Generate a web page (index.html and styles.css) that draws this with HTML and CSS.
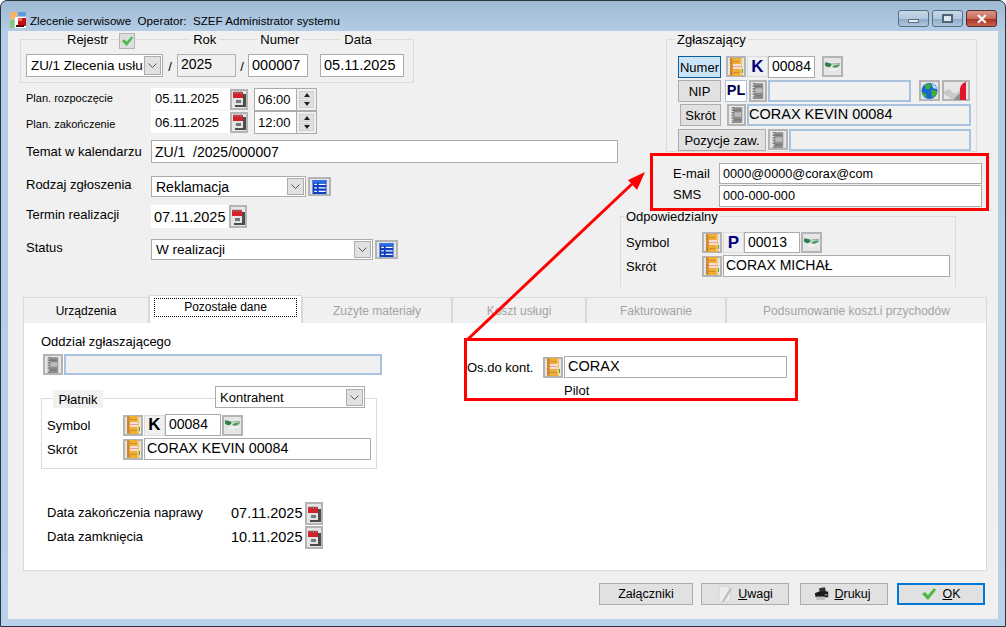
FILE: index.html
```html
<!DOCTYPE html>
<html lang="pl">
<head>
    <meta charset="UTF-8">
    <meta name="viewport" content="width=device-width, initial-scale=1.0">
    <title>Zlecenie serwisowe</title>
    <link rel="stylesheet" href="styles.css">
</head>
<body>
    <svg class="defs" width="0" height="0">
        <symbol id="book" viewBox="0 0 16 18">
            <rect x="2" y="0" width="12" height="18" rx="1" fill="#eeae36"/>
            <rect x="2" y="0" width="3" height="18" fill="#dc9a30"/>
            <rect x="12" y="1" width="2" height="16" fill="#f6c55a"/>
            <rect x="5" y="6" width="8" height="5" fill="#f7ded6"/>
            <rect x="5" y="8" width="8" height="1" fill="#ea9f95"/>
            <rect x="5" y="3" width="7" height="1" fill="#d08c34"/>
            <rect x="5" y="14" width="7" height="1" fill="#d08c34"/>
            <path d="M2 2h2M2 5h2M2 8h2M2 11h2M2 14h2M2 16h2" stroke="#b4623a" stroke-width="1"/>
            <rect x="14" y="11" width="1" height="4" fill="#4aa84a"/>
        </symbol>
        <symbol id="book-off" viewBox="0 0 16 18">
            <rect x="2" y="0" width="12" height="18" rx="1" fill="#8e8e8e"/>
            <rect x="2" y="0" width="3" height="18" fill="#7d7d7d"/>
            <rect x="5" y="6" width="8" height="5" fill="#bcbcbc"/>
            <rect x="5" y="3" width="7" height="1" fill="#6b6b6b"/>
            <rect x="5" y="14" width="7" height="1" fill="#6b6b6b"/>
            <path d="M1 2h3M1 5h3M1 8h3M1 11h3M1 14h3M1 16h3" stroke="#f2f2f2" stroke-width="1"/>
        </symbol>
        <symbol id="cal" viewBox="0 0 14 16">
            <rect x="3" y="3" width="11" height="13" fill="#4c4c4c"/>
            <rect x="1" y="1" width="10" height="13" fill="#e4e4e4"/>
            <rect x="1" y="1" width="10" height="6" fill="#d4202a"/>
            <path d="M3 0v3M6 0v3M9 0v3" stroke="#8a8a8a"/>
            <rect x="4" y="9" width="5" height="3" fill="#777"/>
        </symbol>
        <symbol id="glasses" viewBox="0 0 18 12">
            <path d="M1 1l7 2 9-1" fill="none" stroke="#8fa996" stroke-width="1"/>
            <path d="M1 2c3-1 6 0 7 2-1 3-6 3-7 0z" fill="#2f8049"/>
            <path d="M9 5c2-1 5-2 8-2-1 3-5 5-8 3z" fill="#4a9c63"/>
            <path d="M5 9c3 1 7 0 10-2" fill="none" stroke="#fff" stroke-width="1"/>
        </symbol>
        <symbol id="list" viewBox="0 0 16 16">
            <rect width="16" height="16" fill="#0f3fc0"/>
            <rect width="16" height="3" fill="#2f72e6"/>
            <path d="M2 5h3M7 5h8M2 9h3M7 9h8M2 13h3M7 13h8" stroke="#fff" stroke-width="1.400"/>
        </symbol>
        <symbol id="globe" viewBox="0 0 18 18">
            <circle cx="9" cy="9" r="8.500" fill="#1566d6"/>
            <path d="M4 3c3-2 6-2 7 0l-2 4-4 0zM11 8l6 1c0 4-2 6-5 7l-1-3zM1 10l4 2 1 4c-3-1-5-3-5-6z" fill="#43b02a"/>
            <path d="M11 1c3 1 5 3 6 6l-4-1z" fill="#bfe3f7"/>
        </symbol>
        <symbol id="check-off" viewBox="0 0 24 18">
            <path d="M0 9l5-2 6 5 5-4 0 10H9L0 12z" fill="#c9c9c9"/>
            <path d="M9 18l7-7v7z" fill="#8f8f8f"/>
            <path d="M16 18V8c0-4 2-7 6-8v18z" fill="#e01528"/>
        </symbol>
        <symbol id="tick" viewBox="0 0 16 14">
            <path d="M1 7l3-2 3 3 6-7 2 2-8 10z" fill="#4cb648" stroke="#8fd08a" stroke-width="0.500"/>
        </symbol>
        <symbol id="note" viewBox="0 0 16 18">
            <path d="M2 1h8l4 4-1 12H2z" fill="#ececec" stroke="#d4d4d4"/>
            <path d="M5 16l8-13 2 1-8 13z" fill="#bdbdbd"/>
        </symbol>
        <symbol id="printer" viewBox="0 0 18 16">
            <path d="M6 1l7-1 2 7H7z" fill="#333"/>
            <path d="M1 7l5-2h11v7H2z" fill="#1c1c1c"/>
            <rect x="3" y="11" width="10" height="4" fill="#bdbdbd"/>
            <rect x="13" y="8" width="3" height="2" fill="#888"/>
        </symbol>
        <symbol id="chevron" viewBox="0 0 9 5">
            <path d="M0.500 0.500L4.500 4.500L8.500 0.500" fill="none" stroke="#555" stroke-width="1"/>
        </symbol>
    </svg>

    <div class="window">
        <div class="titlebar">
            <svg class="app-icon" viewBox="0 0 16 16" width="16" height="16">
                <rect width="7" height="7" fill="#f4b56a"/>
                <rect x="8" width="8" height="4" fill="#5d9ad8"/>
                <rect y="8" width="4" height="8" fill="#7fcf6f"/>
                <rect x="5" y="5" width="11" height="11" fill="#fff"/>
                <rect x="8" y="6" width="8" height="8" fill="#c41010"/>
                <rect x="8" y="6" width="4" height="3" fill="#e86a5a"/>
                <rect x="6" y="13" width="8" height="2" fill="#5a0a0a"/>
            </svg>
            <span class="title-text">Zlecenie serwisowe&nbsp; Operator:&nbsp; SZEF Administrator systemu</span>
            <div class="win-buttons">
                <div class="win-btn"><span class="min-glyph"></span></div>
                <div class="win-btn"><span class="max-glyph"></span></div>
                <div class="win-btn win-close"><span class="close-glyph">✕</span></div>
            </div>
        </div>

        <div class="client">
            <div class="top">
                <!-- lewa kolumna -->
                <div class="left-col">
                    <div class="reg-group">
                        <div class="reg-legend">
                            <span class="leg leg-rejestr">Rejestr</span>
                            <span class="ib reg-check"><svg width="13" height="12"><use href="#tick"/></svg></span>
                            <span class="leg leg-rok">Rok</span>
                            <span class="leg leg-numer">Numer</span>
                            <span class="leg leg-data">Data</span>
                        </div>
                        <div class="reg-fields">
                            <div class="combo reg-combo"><span class="combo-text">ZU/1 Zlecenia usłu</span><span class="combo-btn"><svg width="9" height="5"><use href="#chevron"/></svg></span></div>
                            <span class="slash slash1">/</span>
                            <div class="fld fld-off reg-rok">2025</div>
                            <span class="slash slash2">/</span>
                            <div class="fld reg-num">000007</div>
                            <div class="fld reg-data">05.11.2025</div>
                        </div>
                    </div>

                    <div class="row plan-first">
                        <span class="lbl lbl-small plan-lbl1">Plan. rozpoczęcie</span>
                        <div class="date-val date-plan date-plan1">05.11.2025</div>
                        <span class="ib cal-btn"><svg width="14" height="16"><use href="#cal"/></svg></span>
                        <div class="time-box"><span class="time-val">06:00</span><span class="spin"><i class="up"></i><i class="down"></i></span></div>
                    </div>
                    <div class="row plan-second">
                        <span class="lbl lbl-small plan-lbl2">Plan. zakończenie</span>
                        <div class="date-val date-plan">06.11.2025</div>
                        <span class="ib cal-btn"><svg width="14" height="16"><use href="#cal"/></svg></span>
                        <div class="time-box"><span class="time-val">12:00</span><span class="spin"><i class="up"></i><i class="down"></i></span></div>
                    </div>

                    <div class="row temat-row">
                        <span class="lbl">Temat w kalendarzu</span>
                        <div class="fld temat-fld">ZU/1&nbsp; /2025/000007</div>
                    </div>
                    <div class="row rodzaj-row">
                        <span class="lbl lbl-up">Rodzaj zgłoszenia</span>
                        <div class="combo rodzaj-combo"><span class="combo-text">Reklamacja</span><span class="combo-btn"><svg width="9" height="5"><use href="#chevron"/></svg></span></div>
                        <span class="ib list-btn"><svg width="15" height="14"><use href="#list"/></svg></span>
                    </div>
                    <div class="row termin-row">
                        <span class="lbl lbl-up">Termin realizacji</span>
                        <div class="date-val date-termin">07.11.2025</div>
                        <span class="ib cal-btn cal-termin"><svg width="14" height="16"><use href="#cal"/></svg></span>
                    </div>
                    <div class="row status-row">
                        <span class="lbl lbl-up">Status</span>
                        <div class="combo status-combo"><span class="combo-text">W realizacji</span><span class="combo-btn"><svg width="9" height="5"><use href="#chevron"/></svg></span></div>
                        <span class="ib list-btn"><svg width="15" height="14"><use href="#list"/></svg></span>
                    </div>
                </div>

                <!-- prawa kolumna -->
                <div class="right-col">
                    <div class="group zgl-group">
                        <span class="legend zgl-legend">Zgłaszający</span>
                        <div class="zgl-row zgl-row1">
                            <span class="side-btn side-active">Numer</span>
                            <span class="ib book-btn ml5"><svg width="16" height="18"><use href="#book"/></svg></span>
                            <span class="letter ml1 navy">K</span>
                            <div class="fld code-short">00084</div>
                            <span class="ib eye-btn ml7"><svg width="18" height="12"><use href="#glasses"/></svg></span>
                        </div>
                        <div class="zgl-row">
                            <span class="side-btn">NIP</span>
                            <span class="pl-box ml4">PL</span>
                            <span class="ib book-off-btn ml2"><svg width="14" height="18"><use href="#book-off"/></svg></span>
                            <div class="fld fld-off fld-blue ml1 nip-fld"></div>
                            <span class="ib eye-btn ml8"><svg width="18" height="18"><use href="#globe"/></svg></span>
                            <span class="ib check-btn ml2"><svg width="24" height="18"><use href="#check-off"/></svg></span>
                        </div>
                        <div class="zgl-row">
                            <span class="side-btn side-skrot">Skrót</span>
                            <span class="ib book-off-btn btn19 ml6"><svg width="14" height="18"><use href="#book-off"/></svg></span>
                            <div class="fld fld-off fld-blue ml1 skrot-fld">CORAX KEVIN 00084</div>
                        </div>
                        <div class="zgl-row zgl-row4">
                            <span class="side-btn side-poz">Pozycje zaw.</span>
                            <span class="ib book-off-btn btn20 ml2"><svg width="14" height="18"><use href="#book-off"/></svg></span>
                            <div class="fld fld-off fld-blue ml1 poz-fld"></div>
                        </div>
                    </div>

                    <div class="contact">
                        <div class="contact-row">
                            <span class="contact-lbl">E-mail</span>
                            <div class="fld contact-fld">0000@0000@corax@com</div>
                        </div>
                        <div class="contact-row contact-sms">
                            <span class="contact-lbl lbl-up">SMS</span>
                            <div class="fld contact-fld">000-000-000</div>
                        </div>
                    </div>

                    <div class="group odp-group">
                        <span class="legend odp-legend">Odpowiedzialny</span>
                        <div class="sym-row sym-first">
                            <span class="sym-lbl">Symbol</span>
                            <span class="ib book-btn"><svg width="16" height="18"><use href="#book"/></svg></span>
                            <span class="letter ml1 navy">P</span>
                            <div class="fld code">00013</div>
                            <span class="ib eye-btn ml1"><svg width="18" height="12"><use href="#glasses"/></svg></span>
                        </div>
                        <div class="sym-row sym-second">
                            <span class="sym-lbl">Skrót</span>
                            <span class="ib book-btn"><svg width="16" height="18"><use href="#book"/></svg></span>
                            <div class="fld ml1 odp-skrot">CORAX MICHAŁ</div>
                        </div>
                    </div>
                </div>
            </div>

            <div class="tabs">
                <div class="tab tab-1">Urządzenia</div>
                <div class="tab tab-active"><span class="tab-focus">Pozostałe dane</span></div>
                <div class="tab tab-off tab-3">Zużyte materiały</div>
                <div class="tab tab-off tab-4">Koszt usługi</div>
                <div class="tab tab-off tab-5">Fakturowanie</div>
                <div class="tab tab-off tab-6">Podsumowanie koszt.i przychodów</div>
            </div>

            <div class="panel">
                <div class="panel-left">
                    <div class="oddzial-lbl">Oddział zgłaszającego</div>
                    <div class="oddzial-row">
                        <span class="ib book-off-btn btn20"><svg width="14" height="18"><use href="#book-off"/></svg></span>
                        <div class="fld fld-off fld-blue ml1 oddzial-fld"></div>
                    </div>

                    <div class="group platnik-group">
                        <div class="platnik-head">
                            <span class="platnik-legend">Płatnik</span>
                            <div class="combo platnik-combo"><span class="combo-text">Kontrahent</span><span class="combo-btn"><svg width="9" height="5"><use href="#chevron"/></svg></span></div>
                        </div>
                        <div class="sym-row platnik-sym">
                            <span class="sym-lbl">Symbol</span>
                            <span class="ib book-btn"><svg width="16" height="18"><use href="#book"/></svg></span>
                            <span class="letter ml1">K</span>
                            <div class="fld code">00084</div>
                            <span class="ib eye-btn ml1"><svg width="18" height="12"><use href="#glasses"/></svg></span>
                        </div>
                        <div class="sym-row sym-second">
                            <span class="sym-lbl">Skrót</span>
                            <span class="ib book-btn"><svg width="16" height="18"><use href="#book"/></svg></span>
                            <div class="fld ml1 odp-skrot platnik-skrot">CORAX KEVIN 00084</div>
                        </div>
                    </div>

                    <div class="close-row close-first">
                        <span class="close-lbl">Data zakończenia naprawy</span>
                        <div class="date-val date-termin date-close">07.11.2025</div>
                        <span class="ib cal-btn cal-termin"><svg width="14" height="16"><use href="#cal"/></svg></span>
                    </div>
                    <div class="close-row">
                        <span class="close-lbl">Data zamknięcia</span>
                        <div class="date-val date-termin date-close">10.11.2025</div>
                        <span class="ib cal-btn cal-termin"><svg width="14" height="16"><use href="#cal"/></svg></span>
                    </div>
                </div>
                <div class="panel-right">
                    <div class="osoba-row">
                        <span class="osoba-lbl">Os.do kont.</span>
                        <span class="ib book-btn"><svg width="16" height="18"><use href="#book"/></svg></span>
                        <div class="fld ml1 osoba-fld">CORAX</div>
                    </div>
                    <div class="pilot">Pilot</div>
                </div>
            </div>

            <div class="footer">
                <div class="btn btn-zal">Załączniki</div>
                <div class="btn btn-uwagi"><svg width="16" height="18"><use href="#note"/></svg><span><u>U</u>wagi</span></div>
                <div class="btn btn-druk"><svg width="15" height="14"><use href="#printer"/></svg><span><u>D</u>rukuj</span></div>
                <div class="btn btn-ok"><svg width="16" height="14"><use href="#tick"/></svg><span><u>O</u>K</span></div>
            </div>
        </div>

        <!-- adnotacje na zrzucie -->
        <div class="mark mark-contact"></div>
        <div class="mark mark-osoba"></div>
        <svg class="mark-arrow" width="1006" height="627" viewBox="0 0 1006 627">
            <line x1="467" y1="340" x2="632" y2="184" stroke="#f00" stroke-width="3"/>
            <polygon points="645,172 628,180 637,190" fill="#f00"/>
        </svg>
    </div>
</body>
</html>
```

FILE: styles.css
```css
* {
    margin: 0;
    padding: 0;
    box-sizing: border-box;
}

html, body {
    width: 1006px;
    height: 627px;
    overflow: hidden;
    background: #fff;
}

body {
    font-family: "Liberation Sans", Arial, sans-serif;
    font-size: 13px;
    color: #000;
}

.defs {
    position: absolute;
}

svg {
    display: block;
}

/* okno */
.window {
    position: relative;
    width: 1006px;
    height: 627px;
    border: 1px solid #27363d;
    border-radius: 7px 7px 0 0;
    background: linear-gradient(180deg, #9fb9d3 0, #b3cde6 30px, #b9d1ea 100%);
    overflow: hidden;
}

.titlebar {
    display: flex;
    align-items: center;
    height: 30px;
    padding-left: 9px;
}

.app-icon {
    margin-top: 7px;
}

.title-text {
    margin-left: 4px;
    margin-top: 8px;
    font-size: 11.6px;
    white-space: nowrap;
}

.win-buttons {
    display: flex;
    gap: 3px;
    margin-left: auto;
    margin-right: 8px;
    align-self: flex-start;
    margin-top: 9px;
}

.win-btn {
    display: flex;
    align-items: center;
    justify-content: center;
    width: 31px;
    height: 17px;
    border: 1px solid #566c80;
    border-radius: 3px;
    background: linear-gradient(180deg, #c8d8e8 0, #b2c8dd 50%, #8fabc8 55%, #b0c8e0 100%);
}

.win-close {
    background: linear-gradient(180deg, #d9968a 0, #c9695c 50%, #aa3426 55%, #c9604e 100%);
    border-color: #5a2b2b;
}

.min-glyph {
    width: 11px;
    height: 4px;
    margin-top: 4px;
    background: #e4eaf1;
    border: 1px solid #5a6e80;
}

.max-glyph {
    width: 11px;
    height: 9px;
    border: 2px solid #4f6376;
    background: #dfe6ee;
}

.close-glyph {
    color: #fff;
    font-size: 14px;
    font-weight: bold;
    line-height: 1;
}

.client {
    width: 990px;
    height: 588px;
    margin-left: 7px;
    background: #f0f0f0;
}

.top {
    display: flex;
    height: 259px;
}

.left-col {
    width: 612px;
    padding-left: 12px;
}

.right-col {
    width: 378px;
}

/* pola */
.fld {
    display: flex;
    align-items: center;
    padding: 0 4px;
    border: 1px solid #ababab;
    background: #fff;
    height: 100%;
    font-size: 14px;
    white-space: nowrap;
}

.fld-off {
    background: #f0f0f0;
}

.fld-blue {
    border: 2px solid #a9c2df;
    padding: 0 3px;
}

.ib {
    display: flex;
    align-items: center;
    justify-content: center;
    flex-shrink: 0;
    border: 2px solid #b4b4b4;
    background: #e6e6e6;
}

.combo {
    display: flex;
    align-items: center;
    justify-content: space-between;
    padding: 0 1px 0 4px;
    border: 1px solid #ababab;
    background: #fff;
    height: 100%;
    font-size: 14px;
    white-space: nowrap;
    overflow: hidden;
}

.combo-btn {
    display: flex;
    align-items: center;
    justify-content: center;
    width: 17px;
    height: 17px;
    flex-shrink: 0;
    border: 1px solid #adadad;
    background: #e1e1e1;
}

.ml1 { margin-left: 1px; }
.ml2 { margin-left: 2px; }
.ml4 { margin-left: 4px; }
.ml5 { margin-left: 5px; }
.ml6 { margin-left: 6px; }
.ml7 { margin-left: 7px; }
.ml8 { margin-left: 8px; }

/* rejestr */
.reg-group {
    width: 394px;
    height: 44px;
    margin-top: 8px;
    border: 1px solid #dcdcdc;
}

.reg-legend {
    display: flex;
    align-items: flex-start;
    height: 16px;
    margin-top: -8px;
}

.leg {
    padding: 0 3px;
    background: #f0f0f0;
}

.leg-rejestr { margin-left: 43px; }
.reg-check { width: 16px; height: 16px; margin-left: 8px; margin-top: 1px; border-width: 1px; background: #dedede; }
.leg-rok { margin-left: 55px; }
.leg-numer { margin-left: 38px; }
.leg-data { margin-left: 39px; }

.reg-fields {
    display: flex;
    height: 23px;
    margin-top: 6px;
    padding-left: 5px;
}

.reg-combo { width: 137px; font-size: 13.400px; }
.reg-combo .combo-btn { height: 19px; }
.slash { display: flex; align-items: flex-end; justify-content: center; padding-bottom: 3px; }
.slash1 { width: 14px; }
.slash2 { width: 12px; }
.reg-rok { width: 59px; padding-left: 3px; padding-bottom: 3px; border-color: #b4b4b4; }
.reg-num { width: 60px; padding-left: 3px; padding-bottom: 2px; font-size: 14.500px; }
.reg-data { width: 84px; margin-left: 12px; padding-left: 3px; padding-bottom: 2px; font-size: 14.500px; }

/* wiersze formularza */
.row {
    display: flex;
    align-items: center;
    margin-left: 6px;
}

.lbl {
    width: 125px;
    flex-shrink: 0;
    white-space: nowrap;
}

.lbl-small {
    font-size: 11px;
}

.plan-lbl1 { margin-bottom: 2px; }
.plan-lbl2 { margin-top: 4px; }

.lbl-up {
    margin-bottom: 4px;
}

.plan-first { height: 22px; margin-top: 5px; }
.plan-second { height: 22px; margin-top: 1px; }

.date-val {
    display: flex;
    align-items: center;
    height: 100%;
    background: #fff;
    white-space: nowrap;
}

.date-plan { width: 79px; padding-left: 4px; }
.date-plan1 { padding-bottom: 2px; }
.date-termin { width: 78px; height: 23px; padding-left: 3px; font-size: 14.500px; }
.date-close { padding-left: 4px; padding-bottom: 1px; }

.cal-btn { width: 18px; height: 21px; }
.cal-termin { height: 23px; }

.time-box {
    display: flex;
    width: 63px;
    height: 23px;
    margin-left: 6px;
    border: 1px solid #ababab;
    background: #fff;
}

.time-val {
    display: flex;
    align-items: center;
    width: 43px;
    padding-left: 3px;
    border-right: 1px solid #ababab;
}

.spin {
    display: flex;
    flex-direction: column;
    justify-content: center;
    gap: 1px;
    width: 19px;
    padding: 2px;
    background: #f0f0f0;
}

.spin i {
    display: flex;
    align-items: center;
    justify-content: center;
    height: 8px;
    background: #e1e1e1;
    border: 1px solid #cfcfcf;
}

.spin i::after {
    content: "";
    border-left: 3px solid transparent;
    border-right: 3px solid transparent;
}

.spin .up::after { border-bottom: 4px solid #222; }
.spin .down::after { border-top: 4px solid #222; }

.temat-row { height: 23px; margin-top: 7px; }
.temat-fld { width: 467px; padding-left: 3px; }

.rodzaj-row { height: 21px; margin-top: 13px; }
.rodzaj-combo { width: 155px; }
.list-btn { width: 23px; height: 19px; margin-left: 2px; }

.termin-row { height: 23px; margin-top: 8px; }

.status-row { height: 21px; margin-top: 11px; }
.status-combo { width: 222px; font-size: 13.500px; }

/* grupy */
.group {
    border: 1px solid #dcdcdc;
}

.legend {
    display: inline-block;
    height: 16px;
    padding: 0 2px;
    background: #f0f0f0;
    vertical-align: top;
}

.zgl-group {
    width: 311px;
    height: 113px;
    margin-top: 8px;
    margin-left: 46px;
}

.zgl-legend {
    display: block;
    width: max-content;
    margin-top: -8px;
    margin-left: 8px;
}

.zgl-row {
    display: flex;
    height: 22px;
    margin-top: 2px;
    margin-left: 11px;
}

.zgl-row1 { margin-top: 8px; }
.zgl-row4 { margin-top: 3px; }

.side-btn {
    display: flex;
    align-items: center;
    justify-content: center;
    width: 43px;
    border: 1px solid #adadad;
    background: #e1e1e1;
}

.side-active {
    border-color: #0a5e9e;
    background: #cce4f7;
}

.side-skrot { width: 41px; margin-left: 2px; }
.side-poz { width: 88px; }

.book-btn { width: 20px; height: 21px; }
.book-off-btn { width: 18px; }
.btn19 { width: 19px; }
.btn20 { width: 20px; height: 21px; }
.eye-btn { width: 21px; height: 21px; }
.check-btn { width: 28px; height: 21px; }

.letter {
    display: flex;
    align-items: center;
    justify-content: center;
    width: 21px;
    height: 21px;
    flex-shrink: 0;
    border: 1px solid #dcdcdc;
    background: #f0f0f0;
    font-size: 17px;
    font-weight: bold;
}

.navy { color: #00007f; }

.pl-box {
    display: flex;
    align-items: center;
    justify-content: center;
    width: 22px;
    padding-bottom: 3px;
    border: 1px solid #a9c2df;
    background: #fff;
    font-size: 14.500px;
    font-weight: bold;
    color: #00004f;
}

.code-short { width: 47px; padding-left: 3px; padding-bottom: 2px; }
.code { width: 56px; padding-left: 3px; padding-bottom: 2px; }
.nip-fld { width: 143px; }
.skrot-fld { width: 224px; padding-left: 0; padding-bottom: 2px; font-size: 14.500px; }
.poz-fld { width: 182px; }

.contact {
    margin-top: 11px;
    margin-left: 53px;
}

.contact-row {
    display: flex;
    align-items: center;
    height: 21px;
}

.contact-sms {
    height: 22px;
    margin-top: 1px;
}

.contact-lbl { width: 46px; }
.contact-fld { width: 263px; padding-left: 3px; font-size: 12.700px; }

.odp-group {
    width: 336px;
    height: 71px;
    margin-top: 9px;
    border-bottom: none;
}

.odp-legend {
    display: block;
    width: max-content;
    margin-top: -8px;
    margin-left: 3px;
}

.sym-row {
    display: flex;
    align-items: center;
    padding-left: 5px;
}

.sym-first { height: 21px; margin-top: 7px; }
.sym-second { height: 22px; margin-top: 2px; }

.sym-lbl {
    width: 76px;
    flex-shrink: 0;
}

.odp-skrot { width: 227px; padding-left: 2px; padding-bottom: 2px; }
.platnik-skrot { font-size: 14.300px; }

/* zakładki */
.tabs {
    display: flex;
    align-items: flex-end;
    height: 28px;
    margin-top: 5px;
    margin-left: 15px;
}

.tab {
    display: flex;
    align-items: center;
    justify-content: center;
    height: 26px;
    border: 1px solid #d9d9d9;
    border-bottom: none;
    background: #f0f0f0;
    font-size: 12px;
    white-space: nowrap;
}

.tab-1 { width: 126px; }
.tab-active {
    position: relative;
    z-index: 1;
    width: 153px;
    height: 28px;
    background: #fff;
}
.tab-3 { width: 150px; }
.tab-4 { width: 134px; }
.tab-5 { width: 140px; }
.tab-6 { width: 261px; }

.tab-off {
    color: #a3a3a3;
}

.tab-focus {
    display: flex;
    align-items: center;
    justify-content: center;
    width: 143px;
    height: 19px;
    margin-bottom: 5px;
    border: 1px dotted #000;
}

.panel {
    display: flex;
    width: 964px;
    height: 249px;
    margin-top: -1px;
    margin-left: 15px;
    border: 1px solid #d9d9d9;
    background: #fff;
}

.panel-left {
    width: 426px;
    margin-left: 17px;
}

.oddzial-lbl {
    height: 16px;
    margin-top: 11px;
}

.oddzial-row {
    display: flex;
    height: 21px;
    margin-top: 4px;
    margin-left: 2px;
}

.oddzial-fld { width: 318px; }

.platnik-group {
    width: 336px;
    height: 71px;
    margin-top: 23px;
    background: #fff;
}

.platnik-head {
    display: flex;
    height: 22px;
    margin-top: -13px;
}

.platnik-legend {
    display: flex;
    align-items: center;
    justify-content: center;
    width: 50px;
    height: 18px;
    margin-top: 4px;
    margin-left: 11px;
    background: #f0f0f0;
}

.platnik-combo {
    width: 150px;
    margin-left: 112px;
    font-size: 13px;
}

.platnik-sym { height: 22px; margin-top: 6px; }

.close-row {
    display: flex;
    align-items: flex-start;
    height: 24px;
    margin-left: 6px;
}

.close-first { margin-top: 33px; }

.close-lbl {
    width: 180px;
    flex-shrink: 0;
    line-height: 22px;
}

.panel-right {
    margin-top: 33px;
}

.osoba-row {
    display: flex;
    align-items: center;
    height: 22px;
}

.osoba-lbl { width: 76px; }
.osoba-fld { width: 223px; padding-left: 3px; padding-bottom: 2px; font-size: 14.500px; }

.pilot {
    height: 16px;
    margin-top: 5px;
    margin-left: 97px;
}

/* przyciski */
.footer {
    display: flex;
    justify-content: flex-end;
    margin-top: 12px;
    padding-right: 13px;
}

.btn {
    display: flex;
    align-items: center;
    justify-content: center;
    gap: 5px;
    width: 88px;
    height: 22px;
    border: 1px solid #adadad;
    background: #e1e1e1;
    font-size: 12.500px;
}

.btn-zal { width: 94px; }
.btn-uwagi { margin-left: 8px; }
.btn-druk { margin-left: 11px; padding-right: 3px; }
.btn-ok { margin-left: 9px; border: 2px solid #0078d7; }

/* adnotacje */
.mark {
    position: absolute;
    border: 3px solid #f00;
}

.mark-contact {
    left: 649px;
    top: 152px;
    width: 339px;
    height: 58px;
}

.mark-osoba {
    left: 463px;
    top: 337px;
    width: 334px;
    height: 63px;
}

.mark-arrow {
    position: absolute;
    left: -1px;
    top: -1px;
    pointer-events: none;
}
```
